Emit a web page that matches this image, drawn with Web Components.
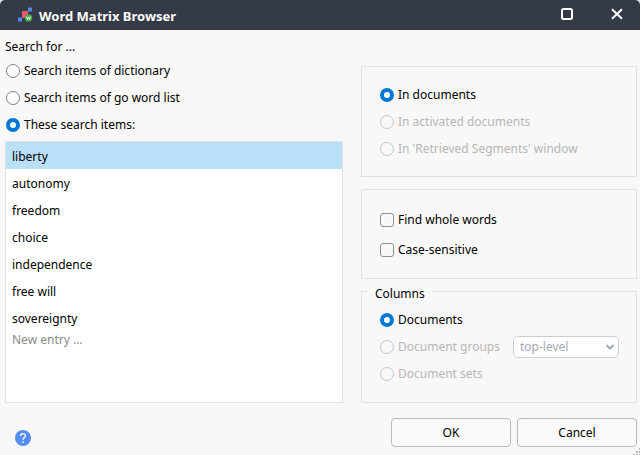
<!DOCTYPE html>
<html lang="en">
<head>
<meta charset="utf-8">
<title>Word Matrix Browser</title>
<style>
  html, body { margin: 0; height: 100%; }
  body {
    --surface: #f8f8f8;
    --line: #e2e2e2;
    --accent: #0078d7;
    --muted: #b6b6b6;
    background: #e4e6e8;
    color: #000;
    font: 12px/18px "Noto Sans", "Open Sans", sans-serif;
  }
</style>
</head>
<body>
<matrix-dialog></matrix-dialog>

<template id="dialog-tpl">
  <style>
    :host { display: flex; flex-direction: column; min-height: 100vh; }
    main {
      flex: 1; display: grid; grid-template-columns: 338fr 276fr; column-gap: 18px;
      padding: 6px 3px 0 5px; background: var(--surface);
    }
    .left, .right { display: flex; flex-direction: column; min-width: 0; }
    .right { gap: 12px; padding-top: 30px; }
    .right group-box:last-child { flex: 1; }
    .options { --group-padding: 15px 17px 13px; }
    h2 { margin: 0; font: inherit; line-height: 21px; }
    term-list { flex: 1; margin-top: 3px; }
    .pair { display: flex; align-items: center; justify-content: space-between; }
  </style>
  <title-bar>Word Matrix Browser</title-bar>
  <main>
    <section class="left">
      <h2>Search for ...</h2>
      <choice-item group="source">Search items of dictionary</choice-item>
      <choice-item group="source">Search items of go word list</choice-item>
      <choice-item group="source" checked>These search items:</choice-item>
      <term-list>
        <term-row selected>liberty</term-row>
        <term-row>autonomy</term-row>
        <term-row>freedom</term-row>
        <term-row>choice</term-row>
        <term-row>independence</term-row>
        <term-row>free will</term-row>
        <term-row>sovereignty</term-row>
      </term-list>
    </section>
    <section class="right">
      <group-box>
        <choice-item group="scope" checked>In documents</choice-item>
        <choice-item group="scope" disabled>In activated documents</choice-item>
        <choice-item group="scope" disabled>In 'Retrieved Segments' window</choice-item>
      </group-box>
      <group-box class="options">
        <choice-item kind="checkbox">Find whole words</choice-item>
        <choice-item kind="checkbox">Case-sensitive</choice-item>
      </group-box>
      <group-box heading="Columns">
        <choice-item group="columns" checked>Documents</choice-item>
        <div class="pair">
          <choice-item group="columns" disabled>Document groups</choice-item>
          <level-select></level-select>
        </div>
        <choice-item group="columns" disabled>Document sets</choice-item>
      </group-box>
    </section>
  </main>
  <dialog-footer></dialog-footer>
</template>

<template id="title-tpl">
  <style>
    :host {
      display: flex; align-items: center; height: 30px; padding: 0 16px 0 17px;
      background: #343a46; color: #fff; border-radius: 5px 5px 0 0; box-sizing: border-box;
    }
    h1 { flex: 1; margin: 0 0 0 6px; padding-top: 2px; font-size: 13px; line-height: 18px; font-weight: 700; }
    svg { display: block; }
    button { border: 0; padding: 0 0 2px; background: none; color: inherit; margin-left: 37px; }
  </style>
  <svg width="16" height="16" viewBox="0 0 16 16" aria-hidden="true">
    <path d="M3 13L13 3" stroke="#4f8af0" stroke-width=".6"/>
    <path d="M5 4h6v3.500L7.500 11H5z" fill="#f0556e"/>
    <rect x="11" y="0.500" width="4" height="4" rx="1" fill="#4f8af0"/>
    <rect x="1" y="10.500" width="4" height="4" rx="1" fill="#4f8af0"/>
    <circle cx="11.500" cy="11" r="3.700" fill="#43a94b"/>
    <path d="M9.500 9.500l1 3 1-2.500 1 2.500 1-3" fill="none" stroke="#e9f8ea" stroke-width=".9"/>
  </svg>
  <h1><slot></slot></h1>
  <button aria-label="Maximize"><svg width="12" height="12" viewBox="0 0 12 12"><rect x="1" y="1" width="10" height="10" rx="1.5" fill="none" stroke="#fff" stroke-width="2"/></svg></button>
  <button aria-label="Close"><svg width="14" height="12" viewBox="0 0 14 12"><path d="M2 1.2L12 10.8M12 1.2L2 10.8" stroke="#fff" stroke-width="2"/></svg></button>
</template>

<template id="choice-tpl">
  <style>
    :host { display: block; }
    label { display: flex; align-items: center; gap: 4px; height: 27px; padding-left: 1px; white-space: nowrap; }
    :host([kind=checkbox]) label { height: 30px; }
    :host([disabled]) { color: var(--muted); }
    input {
      appearance: none; flex: none; box-sizing: border-box; width: 14px; height: 14px; margin: 0;
      border: 1px solid #7d8084; background: #fff;
    }
    input[type=radio] { border-radius: 50%; }
    input[type=radio]:checked { border: 4px solid var(--accent); }
    input[type=checkbox] { border-radius: 3px; border: 1px solid #8b8e92; background: var(--surface); }
    input[type=checkbox]:checked { background: var(--accent); }
    input:disabled { border-color: #c3c6ce; background: var(--surface); }
  </style>
  <label><input><span><slot></slot></span></label>
</template>

<template id="group-tpl">
  <style>
    :host { display: flex; }
    fieldset {
      position: relative; flex: 1; min-width: 0; margin: 0; padding: var(--group-padding, 14px 17px);
      border: 1px solid var(--line);
    }
    legend { position: absolute; top: -7px; left: 6px; padding: 0 7px; background: var(--surface); }
    legend:empty { display: none; }
  </style>
  <fieldset><legend></legend><slot></slot></fieldset>
</template>

<template id="list-tpl">
  <style>
    :host { display: block; box-sizing: border-box; border: 1px solid var(--line); background: #fff; }
    input {
      display: block; width: 100%; box-sizing: border-box; height: 18px; margin: 0; padding: 0 6px;
      border: 0; outline: 0; background: none; font: inherit; color: inherit;
    }
    input::placeholder { color: #8a8a8a; opacity: 1; }
  </style>
  <div role="listbox" aria-label="Search items"><slot></slot></div>
  <input placeholder="New entry ..." aria-label="New entry">
</template>

<template id="row-tpl">
  <style>
    :host { display: block; line-height: 27px; padding: 1px 6px 0; height: 26px; }
    :host([selected]) { background: #b9dff9; }
  </style>
  <slot></slot>
</template>

<template id="select-tpl">
  <style>
    :host { display: grid; align-items: center; width: 106px; }
    select, svg { grid-area: 1 / 1; }
    select {
      appearance: none; box-sizing: border-box; width: 100%; height: 22px; padding: 0 6px; border: 1px solid #cbced6;
      border-radius: 5px; background: #fff; color: #a4a9b5; font: inherit; opacity: 1;
    }
    svg { justify-self: end; margin-right: 4px; pointer-events: none; }
  </style>
  <select disabled aria-label="Document group level"><option>top-level</option></select>
  <svg width="10" height="8" viewBox="0 0 10 8"><path d="M1.5 2L5 5.5 8.5 2" fill="none" stroke="#a4abb6" stroke-width="2"/></svg>
</template>

<template id="footer-tpl">
  <style>
    :host {
      position: relative; display: flex; align-items: center; gap: 6px; padding: 15px 3px 8px 15px;
      background: var(--surface);
    }
    button { box-sizing: border-box; font: inherit; color: inherit; }
    .help { border: 0; padding: 10px 0 0; background: none; margin-right: auto; }
    .action { width: 120px; height: 29px; padding: 0; border: 1px solid #b9b9b9; border-radius: 4px; background: #fafafa; }
    svg { display: block; }
    .grip { position: absolute; right: 0; bottom: 0; }
  </style>
  <button class="help" aria-label="Help">
    <svg width="16" height="16" viewBox="0 0 16 16"><circle cx="8" cy="8" r="8" fill="#568ef0"/><path d="M5.6 6.1C5.6 4.5 6.6 3.7 8 3.7s2.4.8 2.4 2.1c0 1.7-2.3 1.9-2.3 4" fill="none" stroke="#fff" stroke-width="1.3"/><circle cx="8.1" cy="12.1" r=".9" fill="#fff"/></svg>
  </button>
  <button class="action">OK</button>
  <button class="action">Cancel</button>
  <svg class="grip" width="7" height="7" viewBox="0 0 7 7" fill="#b4b4b4"><path d="M6 0h1v2H6zM3 3h2v2H3zM6 3h1v2H6zM0 6h2v1H0zM3 6h2v1H3zM6 6h1v1H6z"/></svg>
</template>

<script>
  class TemplateElement extends HTMLElement {
    constructor() {
      super();
      const tpl = document.getElementById(this.constructor.template);
      this.attachShadow({ mode: "open" }).append(tpl.content.cloneNode(true));
    }
  }

  class TitleBar extends TemplateElement { static template = "title-tpl"; }
  class LevelSelect extends TemplateElement { static template = "select-tpl"; }
  class DialogFooter extends TemplateElement { static template = "footer-tpl"; }
  class MatrixDialog extends TemplateElement { static template = "dialog-tpl"; }

  class ChoiceItem extends TemplateElement {
    static template = "choice-tpl";
    connectedCallback() {
      const input = this.input = this.shadowRoot.querySelector("input");
      input.type = this.getAttribute("kind") || "radio";
      input.checked = this.hasAttribute("checked");
      input.disabled = this.hasAttribute("disabled");
      const group = this.getAttribute("group");
      if (!group) return;
      input.name = group;
      input.addEventListener("change", () => {
        for (const item of this.getRootNode().querySelectorAll(`choice-item[group="${group}"]`))
          item.input.checked = item === this;
      });
    }
  }

  class GroupBox extends TemplateElement {
    static template = "group-tpl";
    connectedCallback() {
      this.shadowRoot.querySelector("legend").textContent = this.getAttribute("heading") || "";
    }
  }

  class TermRow extends TemplateElement {
    static template = "row-tpl";
    connectedCallback() { this.setAttribute("role", "option"); }
  }

  class TermList extends TemplateElement {
    static template = "list-tpl";
    connectedCallback() {
      this.addEventListener("click", (event) => {
        const row = event.target.closest("term-row");
        if (!row) return;
        for (const other of this.children) other.toggleAttribute("selected", other === row);
      });
    }
  }

  customElements.define("title-bar", TitleBar);
  customElements.define("choice-item", ChoiceItem);
  customElements.define("group-box", GroupBox);
  customElements.define("term-row", TermRow);
  customElements.define("term-list", TermList);
  customElements.define("level-select", LevelSelect);
  customElements.define("dialog-footer", DialogFooter);
  customElements.define("matrix-dialog", MatrixDialog);
</script>
</body>
</html>
